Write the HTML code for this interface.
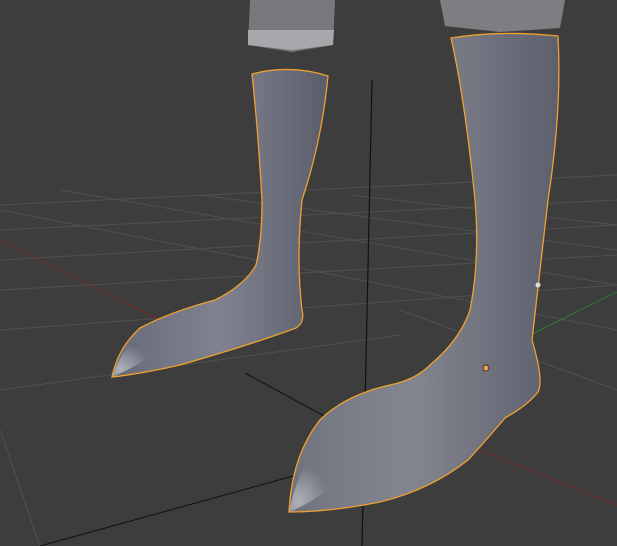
<!DOCTYPE html>
<html><head><meta charset="utf-8"><style>
html,body{margin:0;padding:0;background:#3d3d3d;width:617px;height:546px;overflow:hidden}
</style></head><body>
<svg width="617" height="546" viewBox="0 0 617 546" xmlns="http://www.w3.org/2000/svg">
<defs>
<linearGradient id="g1" x1="0" y1="0" x2="1" y2="0">
<stop offset="0" stop-color="#666977"/><stop offset="0.5" stop-color="#80838f"/><stop offset="1" stop-color="#5a5d6b"/>
</linearGradient>
<linearGradient id="g2" x1="0" y1="0" x2="1" y2="0">
<stop offset="0" stop-color="#70727f"/><stop offset="0.45" stop-color="#84868f"/><stop offset="1" stop-color="#5c5f6d"/>
</linearGradient>
<radialGradient id="toe" cx="0.15" cy="0.85" r="0.5">
<stop offset="0" stop-color="#b0b2ba"/><stop offset="1" stop-color="#b0b2ba" stop-opacity="0"/>
</radialGradient>
</defs>
<rect width="617" height="546" fill="#3d3d3d"/>
<g stroke="#505050" stroke-width="1" fill="none">
<path d="M0 205 L617 175"/><path d="M0 230 L617 200"/><path d="M0 260 L617 225"/><path d="M0 290 L617 255"/>
<path d="M0 330 L617 285"/><path d="M0 390 L400 335"/>
<path d="M0 210 L617 330"/><path d="M60 190 L617 285"/><path d="M200 195 L617 250"/><path d="M350 195 L617 225"/>
<path d="M400 310 L617 390"/><path d="M0 430 L40 546"/>
</g>
<path d="M0 241 L170 325" stroke="#7a2a2a" stroke-width="1"/>
<path d="M480 450 L617 505" stroke="#7a2a2a" stroke-width="1"/>
<path d="M245 373 L350 430" stroke="#111" stroke-width="1"/>
<path d="M40 546 L315 470" stroke="#111" stroke-width="1"/>
<path d="M372 80 L362 546" stroke="#111" stroke-width="1.2"/>
<path d="M617 292 L530 335" stroke="#2f7a2f" stroke-width="1"/>
<!-- upper legs -->
<path d="M250 0 L335 0 L333 45 L292 52 L248 45 Z" fill="#78787c"/>
<path d="M248 30 L334 30 L333 45 L292 50 L248 45 Z" fill="#a8a8ac"/>
<path d="M440 0 L565 0 L560 28 L500 32 L445 26 Z" fill="#7e7e82"/>
<!-- left boot -->
<path d="M252 74 Q290 64 328 76 Q322 140 302 200 Q296 260 302 310 Q305 322 296 328 Q250 345 180 365 Q140 374 112 377 Q118 348 140 328 Q170 312 215 300 Q245 285 256 265 Q262 240 262 200 Q258 130 252 74 Z" fill="url(#g1)" stroke="#f0a030" stroke-width="1.3"/>
<path d="M112 377 Q125 340 150 325 L170 345 Q140 365 112 377 Z" fill="url(#toe)"/>
<!-- right boot -->
<path d="M451 38 Q500 30 558 36 Q562 110 548 200 Q538 290 532 340 Q544 380 538 392 Q528 405 505 418 Q482 445 468 460 Q430 490 380 502 Q330 512 289 512 Q292 455 320 420 Q345 395 390 385 Q415 380 430 365 Q460 340 470 310 Q480 260 475 200 Q465 100 451 38 Z" fill="url(#g2)" stroke="#f0a030" stroke-width="1.3"/>
<path d="M289 512 Q300 460 325 440 L350 470 Q320 500 289 512 Z" fill="url(#toe)"/>
<circle cx="486" cy="368" r="3" fill="#e8a050" stroke="#222" stroke-width="0.8"/>
<circle cx="538" cy="285" r="2.5" fill="#ddd"/>
</svg>
</body></html>
